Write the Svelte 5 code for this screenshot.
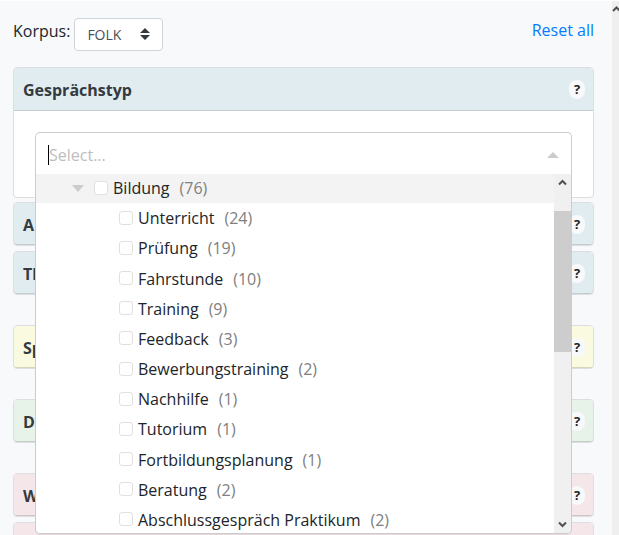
<script>
  const options = [
    ['Unterricht', 24],
    ['Prüfung', 19],
    ['Fahrstunde', 10],
    ['Training', 9],
    ['Feedback', 3],
    ['Bewerbungstraining', 2],
    ['Nachhilfe', 1],
    ['Tutorium', 1],
    ['Fortbildungsplanung', 1],
    ['Beratung', 2],
    ['Abschlussgespräch Praktikum', 2]
  ];
  const groups = [
    { tone: 'blue', titles: ['A', 'Th'] },
    { tone: 'yellow', titles: ['Sp'] },
    { tone: 'green', titles: ['D'] },
    { tone: 'red', titles: ['W', ''] }
  ];
</script>

<div class="page">
  <main>
    <div class="toolbar">
      <label for="korpus">Korpus:</label>
      <span class="select">
        <select id="korpus"><option>FOLK</option></select>
        <svg width="10" height="12" viewBox="0 0 10 12" aria-hidden="true"><path d="M5 0 10 5H0zM0 7h10L5 12z" fill="#343a40" /></svg>
      </span>
      <a href="#reset">Reset all</a>
    </div>

    <section class="card open">
      <header class="blue">
        <h2>Gesprächstyp</h2>
        <button class="help" type="button">?</button>
      </header>
      <div class="body">
        <div class="tree">
          <div class="control">
            <span class="caret"></span>
            <input type="text" placeholder="Select..." aria-label="Gesprächstyp" />
            <svg width="12" height="6" viewBox="0 0 12 6" aria-hidden="true"><path d="M6 0 12 6H0z" fill="#ccc" /></svg>
          </div>
          <div class="menu">
            <div class="rows">
              <div class="row parent">
                <svg width="12" height="7" viewBox="0 0 12 7" aria-hidden="true"><path d="M0 0h12L6 7z" fill="#ccc" /></svg>
                <label><input type="checkbox" />Bildung <span>(76)</span></label>
              </div>
              {#each options as [name, count]}
                <div class="row">
                  <label><input type="checkbox" />{name} <span>({count})</span></label>
                </div>
              {/each}
            </div>
            <div class="track">
              <svg width="9" height="7" viewBox="0 0 9 7" aria-hidden="true"><path d="M1 5.500 4.500 2 8 5.500" fill="none" stroke="#505050" stroke-width="2" /></svg>
              <div class="thumb"></div>
              <svg class="down" width="9" height="7" viewBox="0 0 9 7" aria-hidden="true"><path d="M1 1.500 4.500 5 8 1.500" fill="none" stroke="#505050" stroke-width="2" /></svg>
            </div>
          </div>
        </div>
      </div>
    </section>

    {#each groups as group}
      <div class="group">
        {#each group.titles as title}
          <section class="card">
            <header class={group.tone}>
              <h2>{title}</h2>
              {#if title}<button class="help" type="button">?</button>{/if}
            </header>
          </section>
        {/each}
      </div>
    {/each}
  </main>
  <div class="gutter">
    <svg width="7" height="7" viewBox="0 0 7 7" aria-hidden="true"><path d="M1 6 4.500 2.500 8 6" fill="none" stroke="#505050" stroke-width="2" /></svg>
  </div>
</div>

<style>
  :global(body) {
    margin: 0;
  }
  .page {
    box-sizing: border-box;
    display: flex;
    height: 100vh;
    overflow: hidden;
    border-top: 1px solid #fff;
    background: #f8f9fb;
    color: #212529;
    font: 16px/24px "Segoe UI", "Open Sans", "Noto Sans", sans-serif;
  }
  .page * {
    box-sizing: border-box;
  }
  main {
    flex: 1;
    min-width: 0;
    padding: 17px 18px 0 13px;
  }
  .gutter {
    flex: none;
    width: 7px;
    padding-top: 4px;
    background: #efefef;
  }
  .gutter svg {
    display: block;
  }
  .toolbar {
    display: flex;
    align-items: flex-start;
    gap: 4px;
    height: 49px;
  }
  .toolbar label {
    padding-top: 1px;
  }
  .toolbar a {
    margin-left: auto;
    color: #007bff;
    text-decoration: none;
  }
  .select {
    position: relative;
    display: block;
  }
  .select svg {
    position: absolute;
    right: 13px;
    top: 10px;
    pointer-events: none;
  }
  select {
    display: block;
    width: 89px;
    height: 33px;
    padding: 0 12px;
    border: 1px solid #ced4da;
    border-radius: 4px;
    appearance: none;
    background: #fff;
    color: #495057;
    font: inherit;
    font-size: 14px;
  }
  .card {
    border: 1px solid #dcdee0;
    border-radius: 4px;
    background: #fff;
  }
  .open {
    margin-bottom: 4px;
  }
  header {
    display: flex;
    align-items: center;
    justify-content: space-between;
    height: 43px;
    padding: 1px 8px 0 9px;
    border-bottom: 1px solid #c4ced2;
    border-radius: 3px 3px 0 0;
  }
  .group header {
    height: 42px;
    padding-top: 2px;
    border-radius: 3px;
  }
  .blue {
    background: #e1ecf1;
  }
  .yellow {
    background: #fafae1;
    border-bottom-color: #d5d5bd;
  }
  .green {
    background: #e7f2e9;
    border-bottom-color: #c3cec6;
  }
  .red {
    background: #f5e6e9;
    border-bottom-color: #d2c5c8;
  }
  h2 {
    margin: 0;
    color: #343a40;
    font-size: 16px;
    font-weight: 700;
  }
  .help {
    width: 16px;
    height: 19px;
    padding: 0;
    border: 0;
    border-radius: 8px;
    background: #f8f9fa;
    color: #212529;
    font: inherit;
    font-size: 13px;
    font-weight: 700;
    line-height: 19px;
  }
  .group {
    display: flex;
    flex-direction: column;
    gap: 5px;
    margin-bottom: 30px;
  }
  .body {
    padding: 21px 21px 23px;
  }
  .tree {
    position: relative;
  }
  .control {
    display: flex;
    align-items: center;
    height: 42px;
    padding: 2px 12px 0;
    border: 1px solid #ccc;
    border-bottom: 0;
    border-radius: 5px 5px 0 0;
  }
  .caret {
    width: 1px;
    height: 20px;
    background: #000;
  }
  .control input {
    flex: 1;
    min-width: 0;
    padding: 0;
    border: 0;
    outline: 0;
    background: none;
    font: inherit;
  }
  .control input::placeholder {
    color: #bdbdbd;
    opacity: 1;
  }
  .menu {
    position: absolute;
    z-index: 2;
    top: 42px;
    left: 0;
    right: 0;
    display: flex;
    height: 360px;
    overflow: hidden;
    border: 1px solid #ccc;
    border-top: 0;
    border-radius: 0 0 5px 5px;
    background: #fff;
    box-shadow: 0 1px 0 rgba(0, 0, 0, 0.06);
  }
  .rows {
    display: grid;
    flex: 1;
    grid-auto-rows: 1fr;
    height: 362px;
  }
  .row {
    display: flex;
    align-items: center;
    padding: 0 0 2px 83px;
  }
  .parent {
    gap: 10px;
    margin-bottom: 1px;
    padding: 0 0 1px 36px;
    background: #f3f3f3;
  }
  .row label {
    display: flex;
    align-items: center;
    white-space: nowrap;
  }
  .row span {
    margin-left: 10px;
    color: #808080;
  }
  .row input {
    width: 14px;
    height: 14px;
    margin: 0 5px 1px 0;
    border: 1px solid #e0e0e0;
    border-radius: 3px;
    appearance: none;
    background: #fff;
  }
  .track {
    display: flex;
    flex-direction: column;
    align-items: center;
    width: 17px;
    padding: 5px 0;
    background: #f0f0f0;
  }
  .thumb {
    width: 100%;
    height: 141px;
    margin-top: 25px;
    background: #cdcdcd;
  }
  .down {
    margin-top: auto;
  }
</style>
